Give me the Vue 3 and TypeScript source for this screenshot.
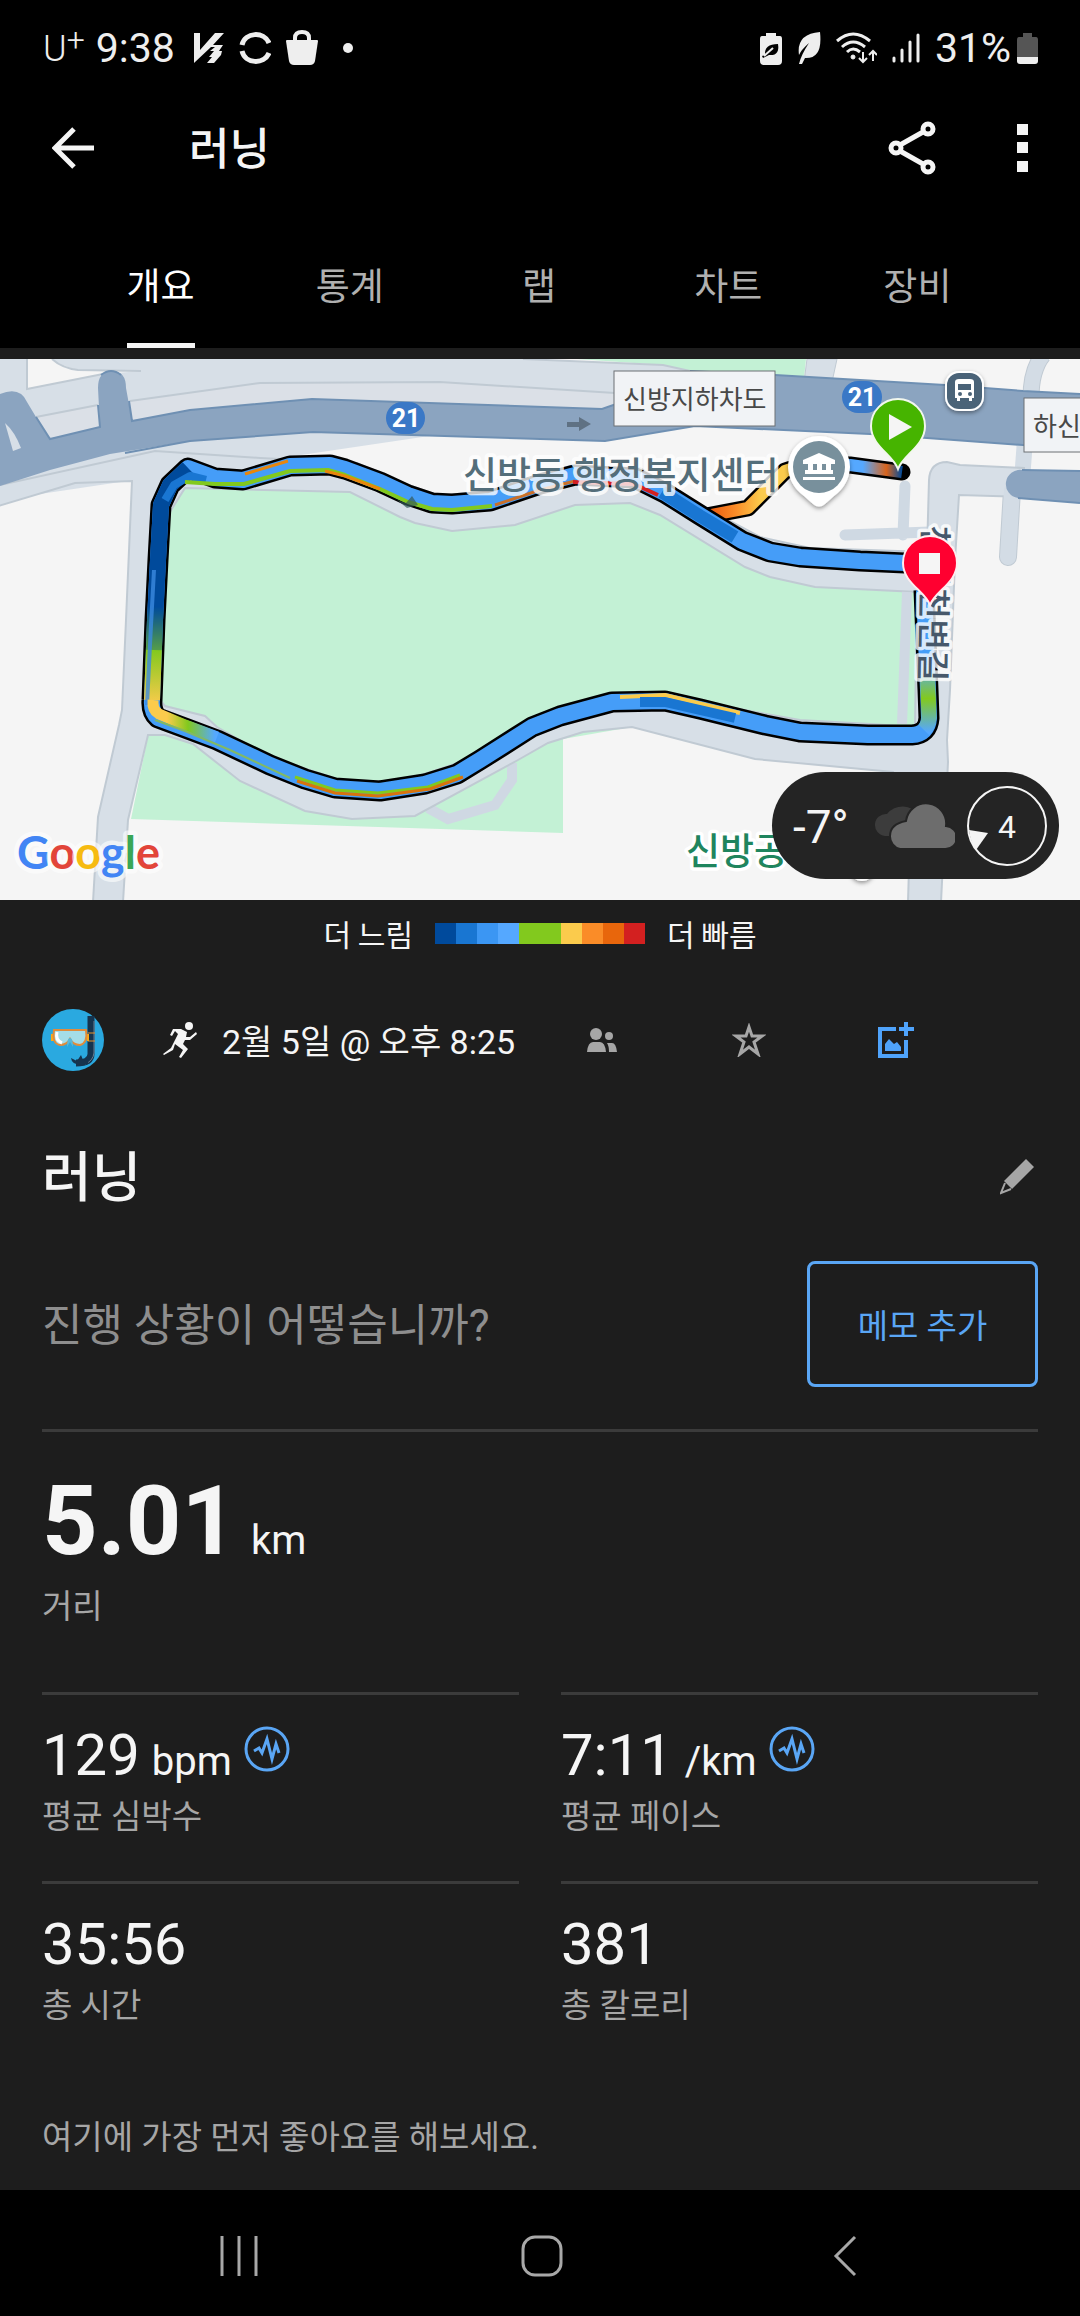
<script setup lang="ts">
import { ref } from 'vue'

interface Stat {
  value: string
  unit?: string
  label: string
  detail?: boolean
}

const tabs: string[] = ['개요', '통계', '랩', '차트', '장비']
const active = ref(0)

const legend: string[] = [
  '#004a9c', '#1976d2', '#3b96f3', '#55a8ff', '#82c91e',
  '#82c91e', '#fbcb4c', '#fa8c28', '#e8660c', '#d32020',
]

const stats: Stat[] = [
  { value: '129', unit: 'bpm', label: '평균 심박수', detail: true },
  { value: '7:11', unit: '/km', label: '평균 페이스', detail: true },
  { value: '35:56', label: '총 시간' },
  { value: '381', label: '총 칼로리' },
]

const loopRoute =
  'M924 590 L928 690 L929 718 Q928 734 912 735 L868 735 L800 732 L765 725 L700 709 L665 701 L612 702 L560 716 L532 727 L480 760 L457 774 L425 784 L380 791 L335 788 L305 779 L270 765 L217 740 L185 728 L158 718 Q151 712 152 700 L155 620 L158 560 L161 505 L170 485 L188 468 L215 478 L243 480 L290 466 L330 465 L345 469 L380 482 L408 495 L432 503 L452 504 L490 501 L540 484 L575 475 L635 478 L665 493 L700 515 L742 541 L770 552 L800 557 L860 561 L905 563'
const startRoute = 'M902 472 L850 465 L806 464 L785 471 L748 508 L706 516'
</script>

<template>
  <div class="screen">
    <header class="top">
      <div class="status">
        <div class="group">
          <span class="carrier">U<sup>+</sup></span>
          <span class="clock">9:38</span>
          <svg width="30" height="30" viewBox="0 0 30 30" fill="#eee"><path d="M0 0H6V17L21 0H30L19 12H29L25 18H28L27 22L20 30H13L18 24H15L20 18H16L21 14H17L0 30Z" /></svg>
          <svg width="32" height="32" viewBox="0 0 32 32" fill="none" stroke="#eee" stroke-width="5"><path d="M3 13C6 0 25 -1 30 11M3 19C6 32 25 33 30 21" /></svg>
          <svg width="32" height="36" viewBox="0 0 32 36"><path d="M0 11Q0 10 1 10H31Q32 10 32 11L29 31Q28 35 24 35H8Q4 35 3 31Z" fill="#eee" /><path d="M9 12V8Q9 2 16 2T23 8V12" fill="none" stroke="#eee" stroke-width="4" /></svg>
          <i class="dot"></i>
        </div>
        <div class="group">
          <svg width="22" height="33" viewBox="0 0 22 33"><path d="M6 1H16V4H20Q22 4 22 7V29Q22 33 18 33H4Q0 33 0 29V7Q0 4 2 4H6Z" fill="#eee" /><path d="M5 23Q4 12 18 12Q20 24 9 23L3 26L2 24L5 23L13 16" fill="#000" /><path d="M4 24L13 16" stroke="#eee" stroke-width="2" /></svg>
          <svg width="24" height="33" viewBox="0 0 24 33"><path d="M2 23Q-1 2 23 0Q26 27 8 26L5 32H2Q4 23 12 11Q4 18 2 23Z" fill="#eee" /></svg>
          <svg width="41" height="33" viewBox="0 0 41 33" fill="none" stroke="#eee" stroke-width="3"><path d="M1 9Q17 -5 34 9M6 15Q17 5 29 15M11 20Q17 14 24 20" /><circle cx="17" cy="25" r="2" fill="#eee" stroke-width="1" /><path d="M27 20V30M23 26L27 30L31 26M37 29V19M33 23L37 19L41 23" stroke-width="2" /></svg>
          <svg width="28" height="30" viewBox="0 0 28 30" stroke="#eee" stroke-width="3" stroke-linecap="round"><path d="M2 25V28M10 17V28M18 9V28M26 2V28" /></svg>
          <span class="charge">31%
            <svg width="21" height="31" viewBox="0 0 21 31"><path d="M6 0H15V4H19Q21 4 21 7V24H0V7Q0 4 2 4H6Z" fill="#555" /><path d="M0 24H21V28Q21 31 18 31H3Q0 31 0 28Z" fill="#eee" /></svg>
          </span>
        </div>
      </div>

      <div class="appbar">
        <button class="icon" aria-label="뒤로">
          <svg width="42" height="42" viewBox="0 0 42 42" fill="none" stroke="#f5f5f5" stroke-width="5"><path d="M22 2L3 21L22 40M3 21H42" /></svg>
        </button>
        <h1>러닝</h1>
        <button class="icon" aria-label="공유">
          <svg width="48" height="54" viewBox="0 0 48 54" fill="none" stroke="#f5f5f5" stroke-width="5"><circle cx="40" cy="8" r="5" /><circle cx="8" cy="27" r="5" /><circle cx="40" cy="46" r="5" /><path d="M12 24L35 11M12 30L35 43" /></svg>
        </button>
        <button class="icon" aria-label="더보기">
          <svg width="11" height="48" viewBox="0 0 11 48" fill="#f5f5f5"><path d="M0 0H11V11H0ZM0 18H11V29H0ZM0 37H11V48H0Z" /></svg>
        </button>
      </div>

      <nav class="tabs">
        <button v-for="(t, i) in tabs" :key="t" :class="{ on: i === active }" @click="active = i"><span>{{ t }}</span></button>
      </nav>
    </header>

    <section class="map">
      <svg viewBox="0 359 1080 541">
        <defs>
          <linearGradient id="west" gradientUnits="userSpaceOnUse" x1="0" y1="560" x2="0" y2="705">
            <stop offset="0" stop-color="#004a9c" /><stop offset=".32" stop-color="#004a9c" /><stop offset=".62" stop-color="#82c91e" /><stop offset="1" stop-color="#fbcb4c" />
          </linearGradient>
          <linearGradient id="south" gradientUnits="userSpaceOnUse" x1="155" y1="0" x2="215" y2="0">
            <stop offset="0" stop-color="#fbcb4c" /><stop offset=".2" stop-color="#fbcb4c" /><stop offset=".55" stop-color="#82c91e" /><stop offset="1" stop-color="#55a8ff" />
          </linearGradient>
          <linearGradient id="east" gradientUnits="userSpaceOnUse" x1="0" y1="665" x2="0" y2="732">
            <stop offset="0" stop-color="#55a8ff" /><stop offset=".5" stop-color="#82c91e" /><stop offset="1" stop-color="#55a8ff" />
          </linearGradient>
          <linearGradient id="start" gradientUnits="userSpaceOnUse" x1="706" y1="0" x2="902" y2="0">
            <stop offset="0" stop-color="#e8530c" /><stop offset=".15" stop-color="#fa8c28" /><stop offset=".28" stop-color="#fbcb4c" /><stop offset=".45" stop-color="#fbcb4c" /><stop offset=".6" stop-color="#55a8ff" /><stop offset=".8" stop-color="#55a8ff" /><stop offset=".92" stop-color="#d8641c" /><stop offset="1" stop-color="#004a9c" />
          </linearGradient>
          <filter id="drop" x="-30%" y="-30%" width="160%" height="160%"><feDropShadow dx="0" dy="2" stdDeviation="2" flood-opacity=".4" /></filter>
        </defs>

        <rect y="359" width="1080" height="541" fill="#f5f5f5" />
        <path d="M577 359H806L804 378L690 371L663 365Z" fill="#c3f1d5" />
        <path d="M0 359H523L663 365L690 371L610 409L0 500Z" fill="#d7dfe7" />
        <path d="M130 401L260 383L440 382L615 393V415L130 425ZM36 417L98 405V430L50 440Z" fill="#dbe0e7" />
        <path d="M27 359V389L103 374L141 371L78 370Q62 366 52 359Z" fill="#f5f5f5" />
        <path d="M27 359V389L103 374M52 359Q62 368 78 370L141 371M130 401L260 383L440 382L615 393M36 417L98 405M523 359L663 365L690 371" fill="none" stroke="#c0cad3" stroke-width="2" />
        <path d="M807 359H837L832 382H804Z" fill="#d7dfe7" stroke="#c0cad3" stroke-width="1" />
        <path d="M1043 355Q1031 370 1031 398" fill="none" stroke="#c0cad3" stroke-width="17" />
        <path d="M1043 355Q1031 370 1031 398" fill="none" stroke="#d3dce5" stroke-width="15" />

        <!-- park areas -->
        <path d="M150 485L350 485L415 515L455 522L515 515L575 495L635 495L665 508L750 558L815 577L930 582V740L563 740V833L131 819L148 736Z" fill="#c3f1d5" />
        <path d="M563 739L632 727L900 780V900H563Z" fill="#f5f5f5" />
        <path d="M428 808L448 819L495 805L512 780V763" fill="none" stroke="#cfd8e3" stroke-width="10" />

        <!-- local streets -->
        <path d="M905 486L903 535M845 535L930 532" fill="none" stroke="#cfd9e3" stroke-width="11" stroke-linecap="round" />
        <path d="M1012 490L1008 557" fill="none" stroke="#c0cad3" stroke-width="18" stroke-linecap="round" />
        <path d="M1025 440L1022 480" stroke="#d3dce5" stroke-width="16" />
        <path fill-rule="evenodd" fill="#d7dfe7" stroke="#c0cad3" stroke-width="2" d="M-5 486L155 451L260 458L357 463L400 482L440 496L500 489L570 466L640 468L700 505L760 537L810 548L927 552L929 480Q930 462 947 462L960 465L1024 468V497L959 495L955 560L950 690L947 740L948 762L941 902H908L911 800L893 772L755 759L632 727L583 732L548 743L518 760L415 816L352 819L305 811L240 781L193 744L165 735H148L128 820L123 902H93L98 817L119 725L122 710L126 620L132 481L75 483L-5 507Z M185 488L350 492L400 517L415 523L452 531L515 525L575 505L630 503L660 515L745 567L770 577L815 587L917 592L915 727L870 724L800 720L700 702L640 691L560 707L500 742L455 764L400 782L340 780L270 757L217 727L205 716L165 706L160 700L168 515Z" />
        <path d="M1012 490L1008 557" fill="none" stroke="#d3dce5" stroke-width="16" stroke-linecap="round" />
        <path d="M907 592L902 724" stroke="#cfd8e3" stroke-width="10" />

        <!-- trunk road -->
        <path fill="#8ba4c0" d="M0 394Q20 386 27 402L36 417L50 439L100 427L98 388Q98 371 112 371T126 388L132 421L190 410L312 399L602 409L622 402L690 371L775 375L945 385L1023 391L1080 394V450L1023 445L927 438L870 434L695 426L605 441L313 432L190 441L110 454L50 470L0 486Z" />
        <path fill="none" stroke="#6f90b3" stroke-width="2" d="M36 417L50 439L100 427L98 405M129 401L132 421L190 410L312 399L602 409L622 402M690 371L775 375L945 385L1023 391L1080 394M1080 450L1023 445L927 438L870 434L695 426L605 441L313 432L190 441L125 453M101 375Q111 367 121 375" />
        <path d="M5 423Q15 432 21 448L13 451Z" fill="#d7dfe7" />
        <path d="M1080 471L1022 470A14 14 0 0 0 1018 498L1080 503Z" fill="#8ba4c0" />
        <path d="M1080 471L1022 470M1018 498L1080 503" stroke="#6f90b3" stroke-width="2" />

        <!-- recorded track -->
        <g fill="none" stroke-linejoin="round">
          <path :d="startRoute" stroke="#000" stroke-width="17" stroke-linecap="round" />
          <path :d="startRoute" stroke="url(#start)" stroke-width="12" />
          <path :d="loopRoute" stroke="#000" stroke-width="21" />
          <path :d="loopRoute" stroke="#459df8" stroke-width="16" />
          <path d="M152 700L155 620L158 560L161 505L170 485L188 468" stroke="url(#west)" stroke-width="16" />
          <path d="M154 650L158 560L161 505L170 485L188 468" stroke="#004a9c" stroke-width="16" stroke-opacity=".35" />
          <path d="M165 500L174 485L190 476L206 480" stroke="#1976d2" stroke-width="8" />
          <path d="M147 705L151 625L154 570" stroke="#3b8ae0" stroke-width="4" stroke-opacity=".8" />
          <path d="M153 700Q152 710 159 714L185 725L217 737" stroke="url(#south)" stroke-width="11" />
          <path d="M155 720L185 731L230 750L290 778" stroke="#82b964" stroke-width="2" />
          <path d="M295 777L335 790L378 793L428 787L460 775" stroke="#82c91e" stroke-width="3" />
          <path d="M297 781L335 793L378 796L430 789L463 777" stroke="#d8730c" stroke-width="3" />
          <path d="M185 482L215 484L244 484L290 471L328 470L345 475L380 489L408 502L432 509L452 510L492 506" stroke="#82c91e" stroke-width="4" />
          <path d="M245 474L288 461M325 471L345 476L380 489" stroke="#e8860c" stroke-width="3" />
          <path d="M495 505L540 490L575 481" stroke="#c9702a" stroke-width="3" />
          <path d="M573 482L634 484L658 495" stroke="#d32020" stroke-width="4" />
          <path d="M662 492L700 516L735 537" stroke="#1976d2" stroke-width="13" />
          <path d="M620 697L665 695L702 704L740 713" stroke="#fbcb4c" stroke-width="4" />
          <path d="M640 702L665 702L700 710L735 718" stroke="#1976d2" stroke-width="10" />
          <path d="M927 665L928 690L929 718Q928 726 924 730" stroke="url(#east)" stroke-width="15" />
        </g>
        <path d="M397 500L406 503L412 496L418 505L407 508Z" fill="#345a5a" fill-opacity=".7" />

        <!-- labels and badges -->
        <path d="M567 422H579V417L591 424L579 431V427H567Z" fill="#5f7183" />
        <g fill="#3a78c6"><rect x="386" y="402" width="39" height="32" rx="16" /><rect x="842" y="381" width="40" height="32" rx="16" /></g>
        <g class="shield"><text x="406" y="427">21</text><text x="862" y="406">21</text></g>
        <g fill="#f1f3f6" stroke="#6d7075" stroke-width="1"><rect x="614" y="371" width="161" height="55" /><rect x="1024" y="398" width="120" height="54" /></g>
        <g class="sign"><text x="623" y="409">신방지하차도</text><text x="1033" y="436">하신</text></g>
        <text x="463" y="489" class="place">신방동 행정복지센터</text>
        <text class="street" transform="translate(923 525) rotate(91)">천안천변길</text>
        <text x="686" y="865" class="park">신방공</text>

        <g filter="url(#drop)"><rect x="945" y="371" width="39" height="40" rx="14" fill="#fff" /><path d="M788 467A31 31 0 1 1 850 467Q849 485 834 496L825 504Q819 509 813 504L804 496Q789 485 788 467Z" fill="#fff" /><circle cx="862" cy="869" r="12" fill="#fff" /></g>
        <rect x="947" y="373" width="35" height="36" rx="12" fill="#4a6378" />
        <path d="M955 382Q955 379 959 379H970Q974 379 974 382V398H972V401H969V398H960V401H957V398H955Z" fill="#fff" /><path d="M958 384H971V390H958Z" fill="#4a6378" /><circle cx="960" cy="394" r="2" fill="#4a6378" /><circle cx="970" cy="394" r="2" fill="#4a6378" />
        <circle cx="819" cy="467" r="26" fill="#78909c" />
        <path d="M803 460L819 453L835 460V464H803ZM808 464H813V474H808ZM817 464H822V474H817ZM826 464H831V474H826ZM805 470H833V474H805ZM803 477H835V480H803Z" fill="#fff" />

        <path d="M898 469C893 455 871 446 871 426A27 27 0 0 1 925 426C925 446 903 455 898 469Z" fill="#46b400" stroke="#f2f7ee" stroke-width="2" /><path d="M889 414L912 427L889 440Z" fill="#f5f5f5" />
        <path d="M930 605C925 591 903 583 903 563A27 27 0 0 1 957 563C957 583 935 591 930 605Z" fill="#ff0030" stroke="#fdeef0" stroke-width="2" /><rect x="919" y="553" width="21" height="21" fill="#f5f5f5" />

        <text x="17" y="869" class="brand"><tspan fill="#4285f4">G</tspan><tspan fill="#e2453a">o</tspan><tspan fill="#f6bb12">o</tspan><tspan fill="#4285f4">g</tspan><tspan fill="#3aa757">l</tspan><tspan fill="#e2453a">e</tspan></text>
      </svg>

      <div class="weather">
        <span class="temp">-7°</span>
        <svg width="82" height="46" viewBox="0 0 82 46"><path d="M12 33A11 11 0 0 1 14 11A20 20 0 0 1 46 12L34 33Z" fill="#3c3c3c" /><path d="M27 46A13 13 0 0 1 17 33Q17 21 33 18A20 20 0 0 1 73 23A11 11 0 0 1 72 46Z" fill="#6d6d6d" stroke="#242424" stroke-width="2" /></svg>
        <span class="wind"><svg viewBox="0 0 82 82"><circle cx="41" cy="41" r="39" fill="none" stroke="#f5f5f5" stroke-width="2" /><path d="M3 45L22 48L10 65Q4 56 3 45Z" fill="#f5f5f5" /></svg><b>4</b></span>
      </div>
    </section>

    <main>
      <div class="legend">
        <span>더 느림</span>
        <div class="scale"><i v-for="(c, i) in legend" :key="i" :style="{ background: c }"></i></div>
        <span>더 빠름</span>
      </div>

      <div class="meta">
        <svg width="62" height="62" viewBox="0 0 62 62"><circle cx="31" cy="31" r="31" fill="#2aa9e0" /><path d="M49 7V45Q49 54 34 54" fill="none" stroke="#16344e" stroke-width="7" /><path d="M52 12V44Q51 52 43 55" fill="none" stroke="#6b7f91" stroke-width="1" /><path d="M29 49L35 52L39 46L41 51L46 50V55Q30 58 29 49Z" fill="#16344e" /><path d="M46 24H53M46 32H53" stroke="#e9952c" stroke-width="1" /><path d="M9 25H12V32H9ZM45 25H47V32H45Z" fill="#fba919" /><path d="M12 21H44Q46 34 38 36Q31 36 28 30Q25 36 18 36Q10 35 12 21Z" fill="#a4dde8" stroke="#e08c3c" stroke-width="2" /><path d="M15 23Q13 31 20 34" fill="none" stroke="#fff" stroke-width="3" /><path d="M25 38Q25 29 28 29T31 38L28 33Z" fill="#59b8d8" /></svg>
        <div class="when">
          <svg width="34" height="36" viewBox="0 0 34 36"><circle cx="26" cy="4" r="4" fill="#f5f5f5" /><path d="M10 7L18 7L24 10L23 15L27 15L33 10L34 12L27 18L22 18L20 22L25 27L18 36L16 35L20 28L12 22L10 28L1 33L0 32L8 26L12 18L15 12L12 9L9 14L7 13Z" fill="#f5f5f5" /></svg>
          <time>2월 5일 @ 오후 8:25</time>
        </div>
        <button class="icon" aria-label="공개 범위">
          <svg width="30" height="24" viewBox="0 0 30 24" fill="#a6a6a6"><circle cx="9" cy="6" r="6" /><circle cx="22" cy="8" r="4" /><path d="M0 24Q1 14 6 14H13Q18 14 19 24ZM20 15H25Q29 15 30 24H22Q22 18 20 15Z" /></svg>
        </button>
        <button class="icon" aria-label="즐겨찾기">
          <svg width="34" height="34" viewBox="0 0 34 34" fill="none" stroke="#a6a6a6" stroke-width="3"><path d="M17 4L20 13H30L22 19L26 31L17 24L8 31L12 19L4 13H14Z" /></svg>
        </button>
        <button class="icon" aria-label="사진 추가">
          <svg width="36" height="36" viewBox="0 0 36 36"><path d="M18 7H2V34H28V18" fill="none" stroke="#4fa3fb" stroke-width="4" /><path d="M21 7H36M28 0V14" stroke="#4fa3fb" stroke-width="4" /><path d="M7 29V22L11 17L16 22L19 20L23 25V29Z" fill="#4fa3fb" /></svg>
        </button>
      </div>

      <div class="title">
        <h2>러닝</h2>
        <button class="icon" aria-label="이름 편집">
          <svg width="34" height="36" viewBox="0 0 34 36"><path d="M26 0L34 8L12 30L4 22Z" fill="#a6a6a6" /><path d="M5 24L1 34L11 30" fill="none" stroke="#a6a6a6" stroke-width="2" /></svg>
        </button>
      </div>

      <div class="note">
        <p>진행 상황이 어떻습니까?</p>
        <button>메모 추가</button>
      </div>

      <section class="distance">
        <p><strong>5.01</strong><span class="unit">km</span></p>
        <span class="label">거리</span>
      </section>

      <section class="stats">
        <div v-for="s in stats" :key="s.label" class="stat">
          <p><span class="value">{{ s.value }}</span><span v-if="s.unit" class="unit">{{ s.unit }}</span>
            <svg v-if="s.detail" class="ring" width="46" height="46" viewBox="0 0 46 46" fill="none" stroke="#5aa6f5" stroke-width="3"><circle cx="23" cy="23" r="21" /><path d="M10 25L15 22L18 27L23 13L28 33L32 18L35 27" /></svg>
          </p>
          <span class="label">{{ s.label }}</span>
        </div>
      </section>

      <p class="likes">여기에 가장 먼저 좋아요를 해보세요.</p>
    </main>

    <footer class="sysnav">
      <button class="icon" aria-label="최근 앱"><svg width="40" height="40" viewBox="0 0 40 40" stroke="#a8a8a8" stroke-width="3"><path d="M3 0V40M20 0V40M37 0V40" /></svg></button>
      <button class="icon" aria-label="홈"><svg width="42" height="42" viewBox="0 0 42 42"><rect x="2" y="2" width="38" height="38" rx="12" fill="none" stroke="#a8a8a8" stroke-width="3" /></svg></button>
      <button class="icon" aria-label="이전"><svg width="24" height="42" viewBox="0 0 24 42" fill="none" stroke="#a8a8a8" stroke-width="3"><path d="M22 2L3 21L22 40" /></svg></button>
    </footer>
  </div>
</template>

<style>
body { margin: 0; background: #000; }
</style>

<style scoped>
.screen { font-family: Roboto, "Noto Sans CJK KR", sans-serif; background: #000; color: #f5f5f5; }
svg { display: block; flex: none; }
h1, h2, p { margin: 0; font-weight: 400; }
button { font: inherit; color: inherit; background: none; border: 0; padding: 0; cursor: pointer; }
.icon { display: flex; align-items: center; justify-content: center; }

.status { height: 96px; padding: 0 42px 0 43px; display: flex; justify-content: space-between; align-items: center; color: #eee; }
.group { display: flex; align-items: center; gap: 15px; }
.carrier { font-size: 36px; font-weight: 300; line-height: 44px; padding-top: 2px; margin-right: -4px; }
.carrier sup { font-size: 32px; line-height: 1px; vertical-align: 10px; }
.clock { font-size: 41px; line-height: 44px; padding-right: 4px; }
.dot { width: 10px; height: 10px; border-radius: 50%; background: #eee; margin-left: 10px; }
.charge { font-size: 41px; line-height: 44px; display: flex; align-items: center; gap: 6px; }

.appbar { height: 104px; padding: 0 52px; display: flex; align-items: center; }
.appbar h1 { flex: 1; margin-left: 95px; padding-top: 4px; font-size: 44px; line-height: 56px; font-weight: 500; }
.appbar .icon + .icon { margin-left: 81px; }

.tabs { height: 148px; padding: 0 68px 0 66px; display: grid; grid-template-columns: repeat(5, 1fr); }
.tabs button { display: flex; justify-content: center; font-size: 37px; line-height: 48px; color: #b0b0b0; }
.tabs span { box-sizing: border-box; height: 148px; padding-top: 64px; border-bottom: 5px solid transparent; }
.tabs .on { color: #fff; }
.tabs .on span { border-color: #f5f5f5; }

.map { position: relative; border-top: 11px solid #1d1d1d; }
.map > svg { width: 100%; }
.shield { font-size: 25px; font-weight: 700; fill: #fff; text-anchor: middle; }
.sign { font-size: 26px; fill: #484848; }
.place { font-size: 37px; font-weight: 500; fill: #546e7a; stroke: rgba(255, 255, 255, 0.8); stroke-width: 8px; stroke-linejoin: round; paint-order: stroke; }
.street { font-size: 34px; font-weight: 500; fill: #46586b; stroke: rgba(255, 255, 255, 0.8); stroke-width: 7px; stroke-linejoin: round; paint-order: stroke; }
.park { font-size: 37px; font-weight: 500; fill: #1f855e; stroke: #fff; stroke-width: 7px; stroke-linejoin: round; paint-order: stroke; }
.brand { font-family: Lato, sans-serif; font-size: 45px; font-weight: 700; stroke: rgba(255, 255, 255, 0.6); stroke-width: 9px; stroke-linejoin: round; paint-order: stroke; }

.weather { position: absolute; right: 21px; bottom: 21px; box-sizing: border-box; width: 287px; height: 107px; padding: 0 11px 0 21px; border-radius: 54px; background: #242424; display: flex; align-items: center; justify-content: flex-end; gap: 11px; }
.temp { flex: 1; font-size: 46px; line-height: 54px; padding-top: 2px; }
.wind { position: relative; display: grid; place-items: center; width: 82px; height: 82px; }
.wind svg { position: absolute; inset: 0; }
.wind b { font-size: 32px; font-weight: 400; padding-top: 2px; }

main { background: #1d1d1d; padding: 0 42px; }
.legend { height: 66px; display: flex; align-items: center; justify-content: center; gap: 22px; font-family: "Noto Sans CJK KR", sans-serif; font-size: 30px; line-height: 40px; }
.scale { display: flex; }
.scale i { width: 21px; height: 21px; }

.meta { height: 148px; padding-right: 69px; display: grid; grid-template-columns: 121px 1fr repeat(3, 147px); align-items: center; }
.when { display: flex; align-items: center; gap: 25px; font-size: 34px; line-height: 44px; white-space: nowrap; }
.when time { padding-top: 4px; }

.title { height: 126px; padding-right: 4px; display: flex; align-items: center; justify-content: space-between; }
.title h2 { font-size: 54px; line-height: 64px; font-weight: 500; padding-top: 4px; }

.note { padding: 21px 0 42px; display: flex; align-items: center; justify-content: space-between; border-bottom: 3px solid #3b3b3b; }
.note p { font-size: 44px; line-height: 56px; padding-top: 4px; color: #8e8e8e; }
.note button { box-sizing: border-box; width: 231px; height: 126px; border: 3px solid #5aa6f5; border-radius: 8px; color: #5aa6f5; font-size: 33px; }

.distance { padding: 41px 0 65px; }
.distance p { display: flex; align-items: baseline; gap: 14px; height: 96px; line-height: 96px; margin-bottom: 18px; }
.distance strong { font-size: 97px; }
.unit { font-size: 40px; }
.label { display: block; font-size: 33px; line-height: 40px; color: #a6a6a6; }

.stats { display: grid; grid-template-columns: 1fr 1fr; column-gap: 42px; }
.stat { border-top: 3px solid #3b3b3b; padding: 28px 0 44px; }
.stat p { display: flex; align-items: baseline; gap: 12px; height: 64px; line-height: 64px; margin-bottom: 10px; }
.value { font-size: 58px; }
.ring { align-self: flex-start; margin-top: 3px; }

.likes { height: 120px; box-sizing: border-box; padding-top: 48px; font-size: 33px; line-height: 40px; color: #a6a6a6; }

.sysnav { height: 126px; box-sizing: border-box; padding: 6px 84px 0 88px; display: grid; grid-template-columns: repeat(3, 1fr); }
</style>
